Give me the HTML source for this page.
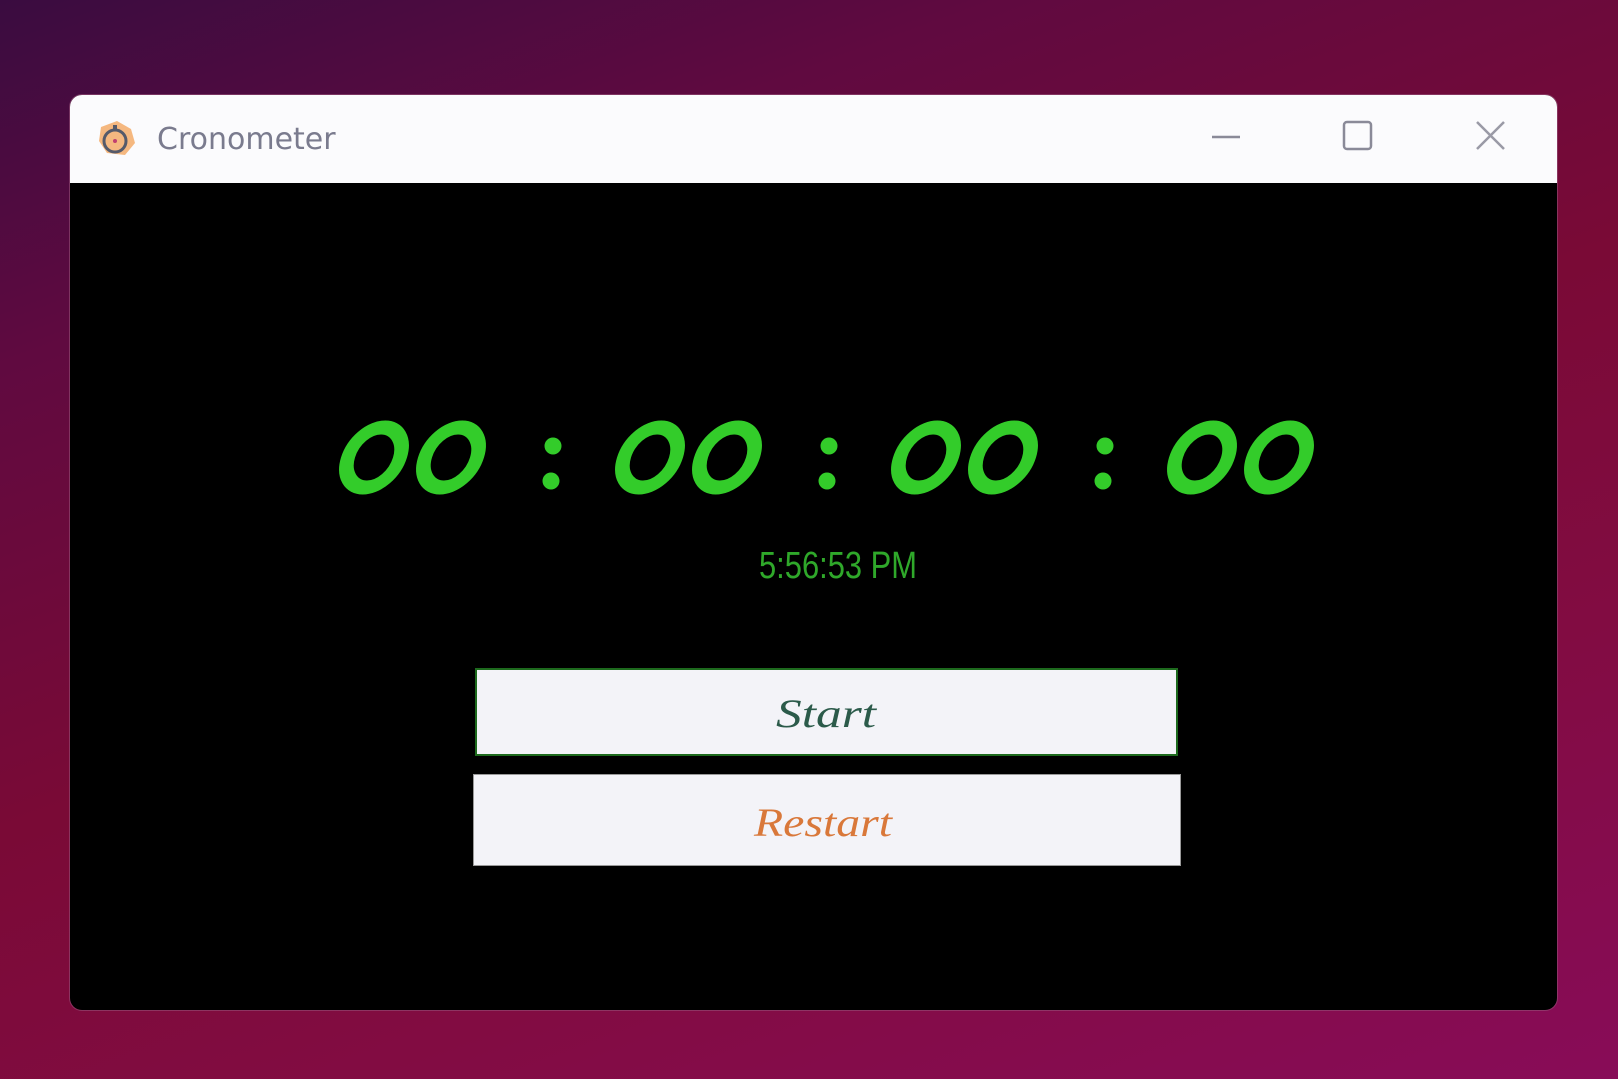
<!DOCTYPE html>
<html><head><meta charset="utf-8"><style>
html,body{margin:0;padding:0}
body{width:1618px;height:1079px;overflow:hidden;position:relative;
background:linear-gradient(160deg,#3a0c40 0%,#600a40 22%,#7a0a36 50%,#820c42 72%,#880c58 100%);}
.win{position:absolute;left:70px;top:95px;width:1487px;height:915px;border-radius:12px;overflow:hidden;background:#000;box-shadow:0 0 0 1px rgba(150,80,120,.6)}
.tb{position:absolute;left:0;top:0;width:100%;height:88px;background:#fbfbfd}
.title{position:absolute;left:87px;top:27px;font:30px "DejaVu Sans","Liberation Sans",sans-serif;color:#7a7b8e}
.btn{position:absolute;background:#f3f3f8}
</style></head><body>
<div class="win">
 <div class="tb">
  <svg style="position:absolute;left:25px;top:22px" width="44" height="44" viewBox="0 0 44 44">
   <path d="M6 10 L22 4 L36 12 L40 26 L30 38 L12 36 L4 24Z" fill="#f4a860" opacity=".8"/>
   <circle cx="20" cy="24" r="11" fill="none" stroke="#555a6a" stroke-width="3"/>
   <rect x="18" y="8" width="4" height="5" fill="#555a6a"/>
   <circle cx="20" cy="24" r="2" fill="#c04070"/>
  </svg>
  <div class="title">Cronometer</div>
  <svg style="position:absolute;left:0;top:0" width="1487" height="88">
   <line x1="1142" y1="42" x2="1170" y2="42" stroke="#8a8a98" stroke-width="2.5"/>
   <rect x="1274" y="27" width="27" height="27" rx="3" fill="none" stroke="#8a8a98" stroke-width="2.5"/>
   <path d="M1407 27 L1434 54 M1434 27 L1407 54" stroke="#9a9aa6" stroke-width="2.5"/>
  </svg>
 </div>
</div>
<svg style="position:absolute;left:0;top:0" width="1618" height="1079">
 <g fill="none" stroke="#33cc2a" stroke-width="14">
  <g transform="translate(0,457.5) skewX(-17)">
   <ellipse cx="374" cy="0" rx="26" ry="30"/>
   <ellipse cx="451" cy="0" rx="26" ry="30"/>
   <ellipse cx="650" cy="0" rx="26" ry="30"/>
   <ellipse cx="727" cy="0" rx="26" ry="30"/>
   <ellipse cx="926" cy="0" rx="26" ry="30"/>
   <ellipse cx="1003" cy="0" rx="26" ry="30"/>
   <ellipse cx="1202" cy="0" rx="26" ry="30"/>
   <ellipse cx="1279" cy="0" rx="26" ry="30"/>
  </g>
 </g>
 <g fill="#33cc2a">
  <circle cx="553" cy="446" r="8.5"/><circle cx="551" cy="481" r="8.5"/>
  <circle cx="829" cy="446" r="8.5"/><circle cx="827" cy="481" r="8.5"/>
  <circle cx="1105" cy="446" r="8.5"/><circle cx="1103" cy="481" r="8.5"/>
 </g>
 <text x="759" y="578" font-family="Liberation Sans, sans-serif" font-size="38" fill="#2fa82a" textLength="158" lengthAdjust="spacingAndGlyphs">5:56:53 PM</text>
</svg>
<div class="btn" style="left:475px;top:668px;width:703px;height:88px;border:2px solid #1d6a1d;box-sizing:border-box"></div>
<div class="btn" style="left:473px;top:774px;width:708px;height:92px;border:1px solid #999;box-sizing:border-box"></div>
<svg style="position:absolute;left:0;top:0" width="1618" height="1079">
 <text x="826" y="727" text-anchor="middle" font-family="Liberation Serif, serif" font-style="italic" font-size="40" fill="#2b5a4a" textLength="100" lengthAdjust="spacingAndGlyphs">Start</text>
 <text x="823" y="836" text-anchor="middle" font-family="Liberation Serif, serif" font-style="italic" font-size="40" fill="#d9783a" textLength="138" lengthAdjust="spacingAndGlyphs">Restart</text>
</svg>
</body></html>
